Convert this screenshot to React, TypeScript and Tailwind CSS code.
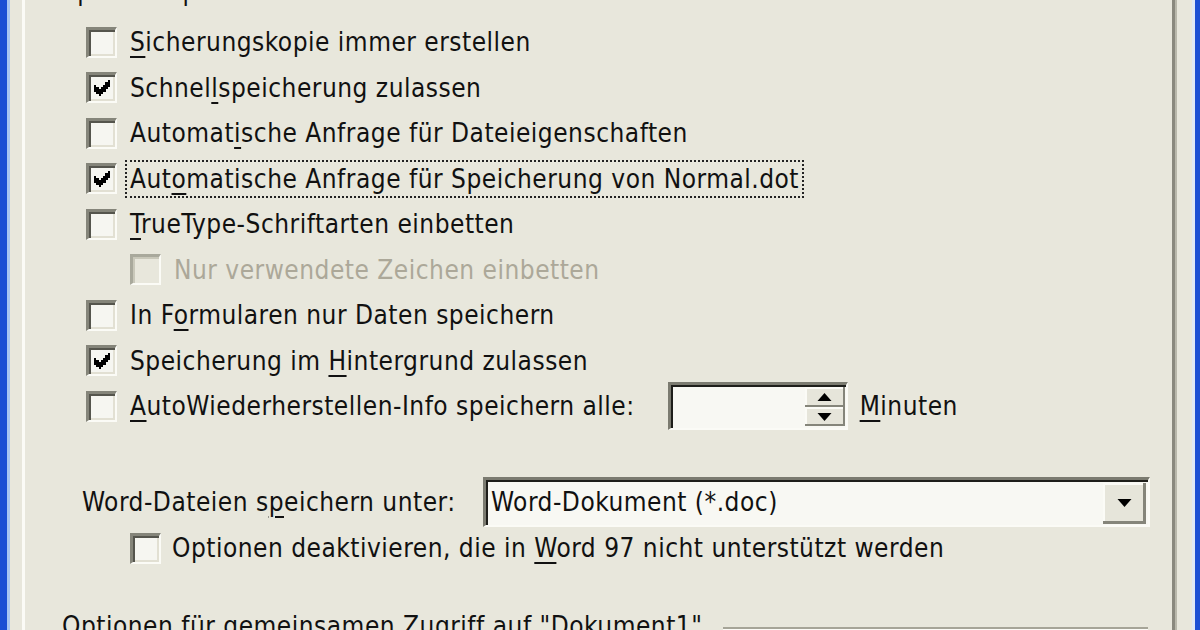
import React from 'react';

const font = "font-['DejaVu_Sans_Condensed','DejaVu_Sans',sans-serif]";

// classic 7x7 check mark, pixel by pixel
const checkPx = [
  [6, 0],
  [5, 1], [6, 1],
  [0, 2], [4, 2], [5, 2], [6, 2],
  [0, 3], [1, 3], [3, 3], [4, 3], [5, 3],
  [0, 4], [1, 4], [2, 4], [3, 4], [4, 4],
  [1, 5], [2, 5], [3, 5],
  [2, 6],
];

function Check() {
  return (
    <svg viewBox="0 0 7 7" className="w-[16px] h-[16px]" shapeRendering="crispEdges">
      {checkPx.map(([x, y]) => (
        <rect key={`${x}-${y}`} x={x} y={y} width={1.05} height={1.05} fill="#000" />
      ))}
    </svg>
  );
}

function Box({ checked = false, disabled = false }: { checked?: boolean; disabled?: boolean }) {
  if (disabled) {
    return (
      <span className="w-[31px] h-[31px] shrink-0 border-t-[3px] border-l-[3px] border-b-[2px] border-r-[2px] border-t-[#a9a99c] border-l-[#a9a99c] border-b-[#fbfbf6] border-r-[#fbfbf6] bg-[#e8e7dc] shadow-[inset_2px_2px_0_#c9c8ba]" />
    );
  }
  return (
    <span className="w-[31px] h-[31px] shrink-0 flex items-center justify-center border-t-[3px] border-l-[3px] border-b-[2px] border-r-[2px] border-t-[#85857a] border-l-[#85857a] border-b-[#fbfbf6] border-r-[#fbfbf6] bg-[#f6f6f1] shadow-[inset_2px_2px_0_#55554d,inset_-2px_-2px_0_#e2e0d3]">
      {checked && <Check />}
    </span>
  );
}

function U({ children }: { children: React.ReactNode }) {
  return <span className="underline decoration-[2px] underline-offset-[5px]">{children}</span>;
}

function Row({
  checked,
  disabled,
  indent,
  focus,
  children,
  extra,
}: {
  checked?: boolean;
  disabled?: boolean;
  indent?: boolean;
  focus?: boolean;
  children: React.ReactNode;
  extra?: React.ReactNode;
}) {
  return (
    <div className={`h-[45.5px] shrink-0 flex items-center ${indent ? 'pl-[105px]' : 'pl-[61px]'}`}>
      <Box checked={checked} disabled={disabled} />
      <span
        className={`ml-[8px] px-[3px] leading-[34px] border-2 border-dotted ${focus ? 'border-[#222]' : 'border-transparent'} ${disabled ? 'text-[#aca899]' : 'text-[#111]'}`}
      >
        {children}
      </span>
      {extra}
    </div>
  );
}

function Tri({ down }: { down?: boolean }) {
  return (
    <svg viewBox="0 0 7 4" className="w-[15px] h-[8px]">
      <path d={down ? 'M0 0h7l-3.5 4z' : 'M0 4h7l-3.5-4z'} fill="#000" />
    </svg>
  );
}

function Spin() {
  return (
    <div className="ml-[28px] w-[180px] h-[48px] flex border-t-[3px] border-l-[3px] border-b-[2px] border-r-[2px] border-t-[#7b7b70] border-l-[#7b7b70] border-b-[#fbfbf6] border-r-[#fbfbf6] shadow-[inset_2px_2px_0_#1e1e1a] bg-[#f8f8f3]">
      <div className="flex-1" />
      <div className="w-[40px] my-[2px] mr-[1px] flex flex-col">
        <div className="flex-1 flex items-center justify-center bg-[#e6e5da] shadow-[inset_-2px_-2px_0_#85857a,inset_2px_2px_0_#fbfbf6]">
          <Tri />
        </div>
        <div className="flex-1 flex items-center justify-center bg-[#e6e5da] shadow-[inset_-2px_-2px_0_#85857a,inset_2px_2px_0_#fbfbf6]">
          <Tri down />
        </div>
      </div>
    </div>
  );
}

export default function App() {
  return (
    <div className={`w-[1200px] h-[630px] overflow-hidden flex bg-[#e8e7dc] text-[26px] tracking-[0.5px] ${font}`}>
      <div className="w-[7px] bg-[#1b4fd4]" />
      <div className="w-[3px] bg-[#a8c6f2]" />
      <div className="w-[12px]" />
      <div className="w-[3px] bg-[#fbfbf6]" />
      <div className="flex-1 relative flex flex-col">
        <div className="h-[19.5px] shrink-0 relative">
          <div className="absolute left-[37px] top-[-26px] leading-[34px] text-[#111]">Speicheroptionen</div>
        </div>
        <Row>
          <U>S</U>icherungskopie immer erstellen
        </Row>
        <Row checked>
          Schnel<U>l</U>speicherung zulassen
        </Row>
        <Row>
          Automat<U>i</U>sche Anfrage für Dateieigenschaften
        </Row>
        <Row checked focus>
          Aut<U>o</U>matische Anfrage für Speicherung von Normal.dot
        </Row>
        <Row>
          <U>T</U>rueType-Schriftarten einbetten
        </Row>
        <Row indent disabled>
          Nur verwendete Zeichen einbetten
        </Row>
        <Row>
          In F<U>o</U>rmularen nur Daten speichern
        </Row>
        <Row checked>
          Speicherung im <U>H</U>intergrund zulassen
        </Row>
        <Row
          extra={
            <>
              <Spin />
              <span className="ml-[12px] text-[#111]">
                <U>M</U>inuten
              </span>
            </>
          }
        >
          <U>A</U>utoWiederherstellen-Info speichern alle:
        </Row>

        <div className="mt-[48px] h-[50px] shrink-0 flex items-center pl-[57px] text-[#111]">
          <span className="w-[401px]">
            Word-Dateien s<U>p</U>eichern unter:
          </span>
          <div className="w-[667px] h-[50px] flex items-center border-t-[3px] border-l-[3px] border-b-[2px] border-r-[2px] border-t-[#7b7b70] border-l-[#7b7b70] border-b-[#fbfbf6] border-r-[#fbfbf6] shadow-[inset_2px_2px_0_#1e1e1a] bg-[#f8f8f3]">
            <span className="flex-1 pl-[5px]">Word-Dokument (*.doc)</span>
            <div className="w-[43px] h-[41px] mr-[2px] mt-[1px] flex items-center justify-center bg-[#e6e5da] shadow-[inset_-3px_-3px_0_#85857a,inset_2px_2px_0_#fbfbf6]">
              <Tri down />
            </div>
          </div>
        </div>

        <div className="h-[42px] shrink-0 flex items-center pl-[105px] text-[#111]">
          <Box />
          <span className="ml-[11px]">
            Optionen deaktivieren, die in <U>W</U>ord 97 nicht unterstützt werden
          </span>
        </div>

        <div className="mt-[40px] shrink-0 flex items-center pl-[37px] text-[#111]">
          <span className="leading-[34px]">Optionen für gemeinsamen Zugriff auf "Dokument1"</span>
          <div className="flex-1 ml-[20px] mr-[24px] mt-[6px] border-t-2 border-t-[#a6a598] border-b-2 border-b-[#fbfbf6]" />
        </div>
      </div>
      <div className="w-[3px] bg-[#8a897e]" />
      <div className="w-[2px] bg-[#b9b8ab]" />
      <div className="w-[15px]" />
      <div className="w-[3px] bg-[#dfe8f6]" />
      <div className="w-[5px] bg-[#1b4fd4]" />
    </div>
  );
}
